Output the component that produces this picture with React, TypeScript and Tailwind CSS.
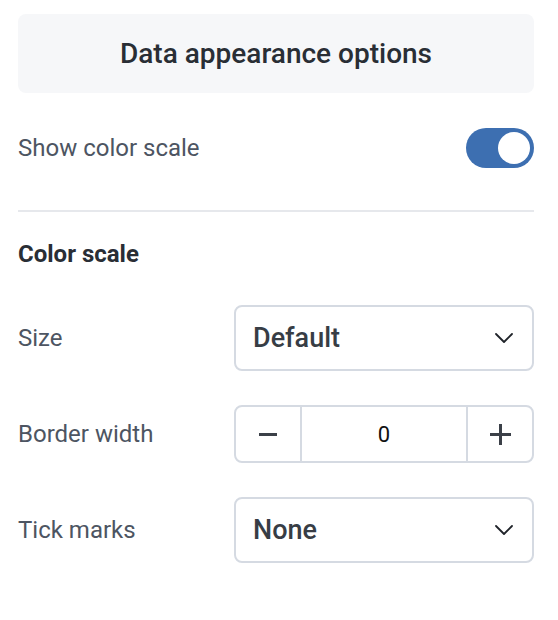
function Chevron() {
  return (
    <svg width="18" height="10" viewBox="0 0 18 10" fill="none" className="text-[#1f2329]">
      <path d="M1 1l8 8 8-8" stroke="currentColor" strokeWidth="1.8" strokeLinecap="round" strokeLinejoin="round" />
    </svg>
  );
}

function Select({ value }: { value: string }) {
  return (
    <div className="flex h-[66px] w-[300px] items-center justify-between rounded-lg border-2 border-[#d5dae2] pl-[17px] pr-[19px]">
      <span className="text-[27px] font-medium text-[#373d45]">{value}</span>
      <Chevron />
    </div>
  );
}

export default function App() {
  return (
    <div className="w-[558px] bg-white pl-[18px] pr-[24px] pt-[14px] pb-[57px] font-['Roboto',sans-serif]">
      <div className="flex h-[79px] items-center justify-center rounded-lg bg-[#f6f7f9]">
        <h1 className="text-[28px] font-medium text-[#292e35]">Data appearance options</h1>
      </div>

      <div className="mt-[35px] flex items-center justify-between">
        <span className="text-[24px] text-[#4d5562]">Show color scale</span>
        <div className="flex h-[40px] w-[68px] items-center justify-end rounded-full bg-[#3d6fb1] pr-[4px]">
          <div className="h-[32px] w-[32px] rounded-full bg-white" />
        </div>
      </div>

      <div className="mt-[42px] h-[2px] bg-[#e6e8ec]" />

      <div className="mt-[26px] text-[24px] leading-[33px] font-bold text-[#292e35]">Color scale</div>

      <div className="mt-[34px] flex flex-col gap-[34px]">
        <div className="flex items-center justify-between">
          <span className="text-[24px] text-[#4d5562]">Size</span>
          <Select value="Default" />
        </div>

        <div className="flex items-center justify-between">
          <span className="text-[24px] text-[#4d5562]">Border width</span>
          <div className="flex h-[58px] w-[300px] overflow-hidden rounded-lg border-2 border-[#d5dae2]">
            <button className="flex w-[64px] items-center justify-center text-[#3b4048]">
              <svg width="18" height="3" viewBox="0 0 18 3">
                <rect width="18" height="3" fill="currentColor" />
              </svg>
            </button>
            <div className="flex flex-1 items-center justify-center border-x-2 border-[#d5dae2] text-[22px] text-[#111]">
              0
            </div>
            <button className="flex w-[64px] items-center justify-center text-[#3b4048]">
              <svg width="21" height="21" viewBox="0 0 21 21">
                <rect x="0" y="9" width="21" height="3" fill="currentColor" />
                <rect x="9" y="0" width="3" height="21" fill="currentColor" />
              </svg>
            </button>
          </div>
        </div>

        <div className="flex items-center justify-between">
          <span className="text-[24px] text-[#4d5562]">Tick marks</span>
          <Select value="None" />
        </div>
      </div>
    </div>
  );
}
